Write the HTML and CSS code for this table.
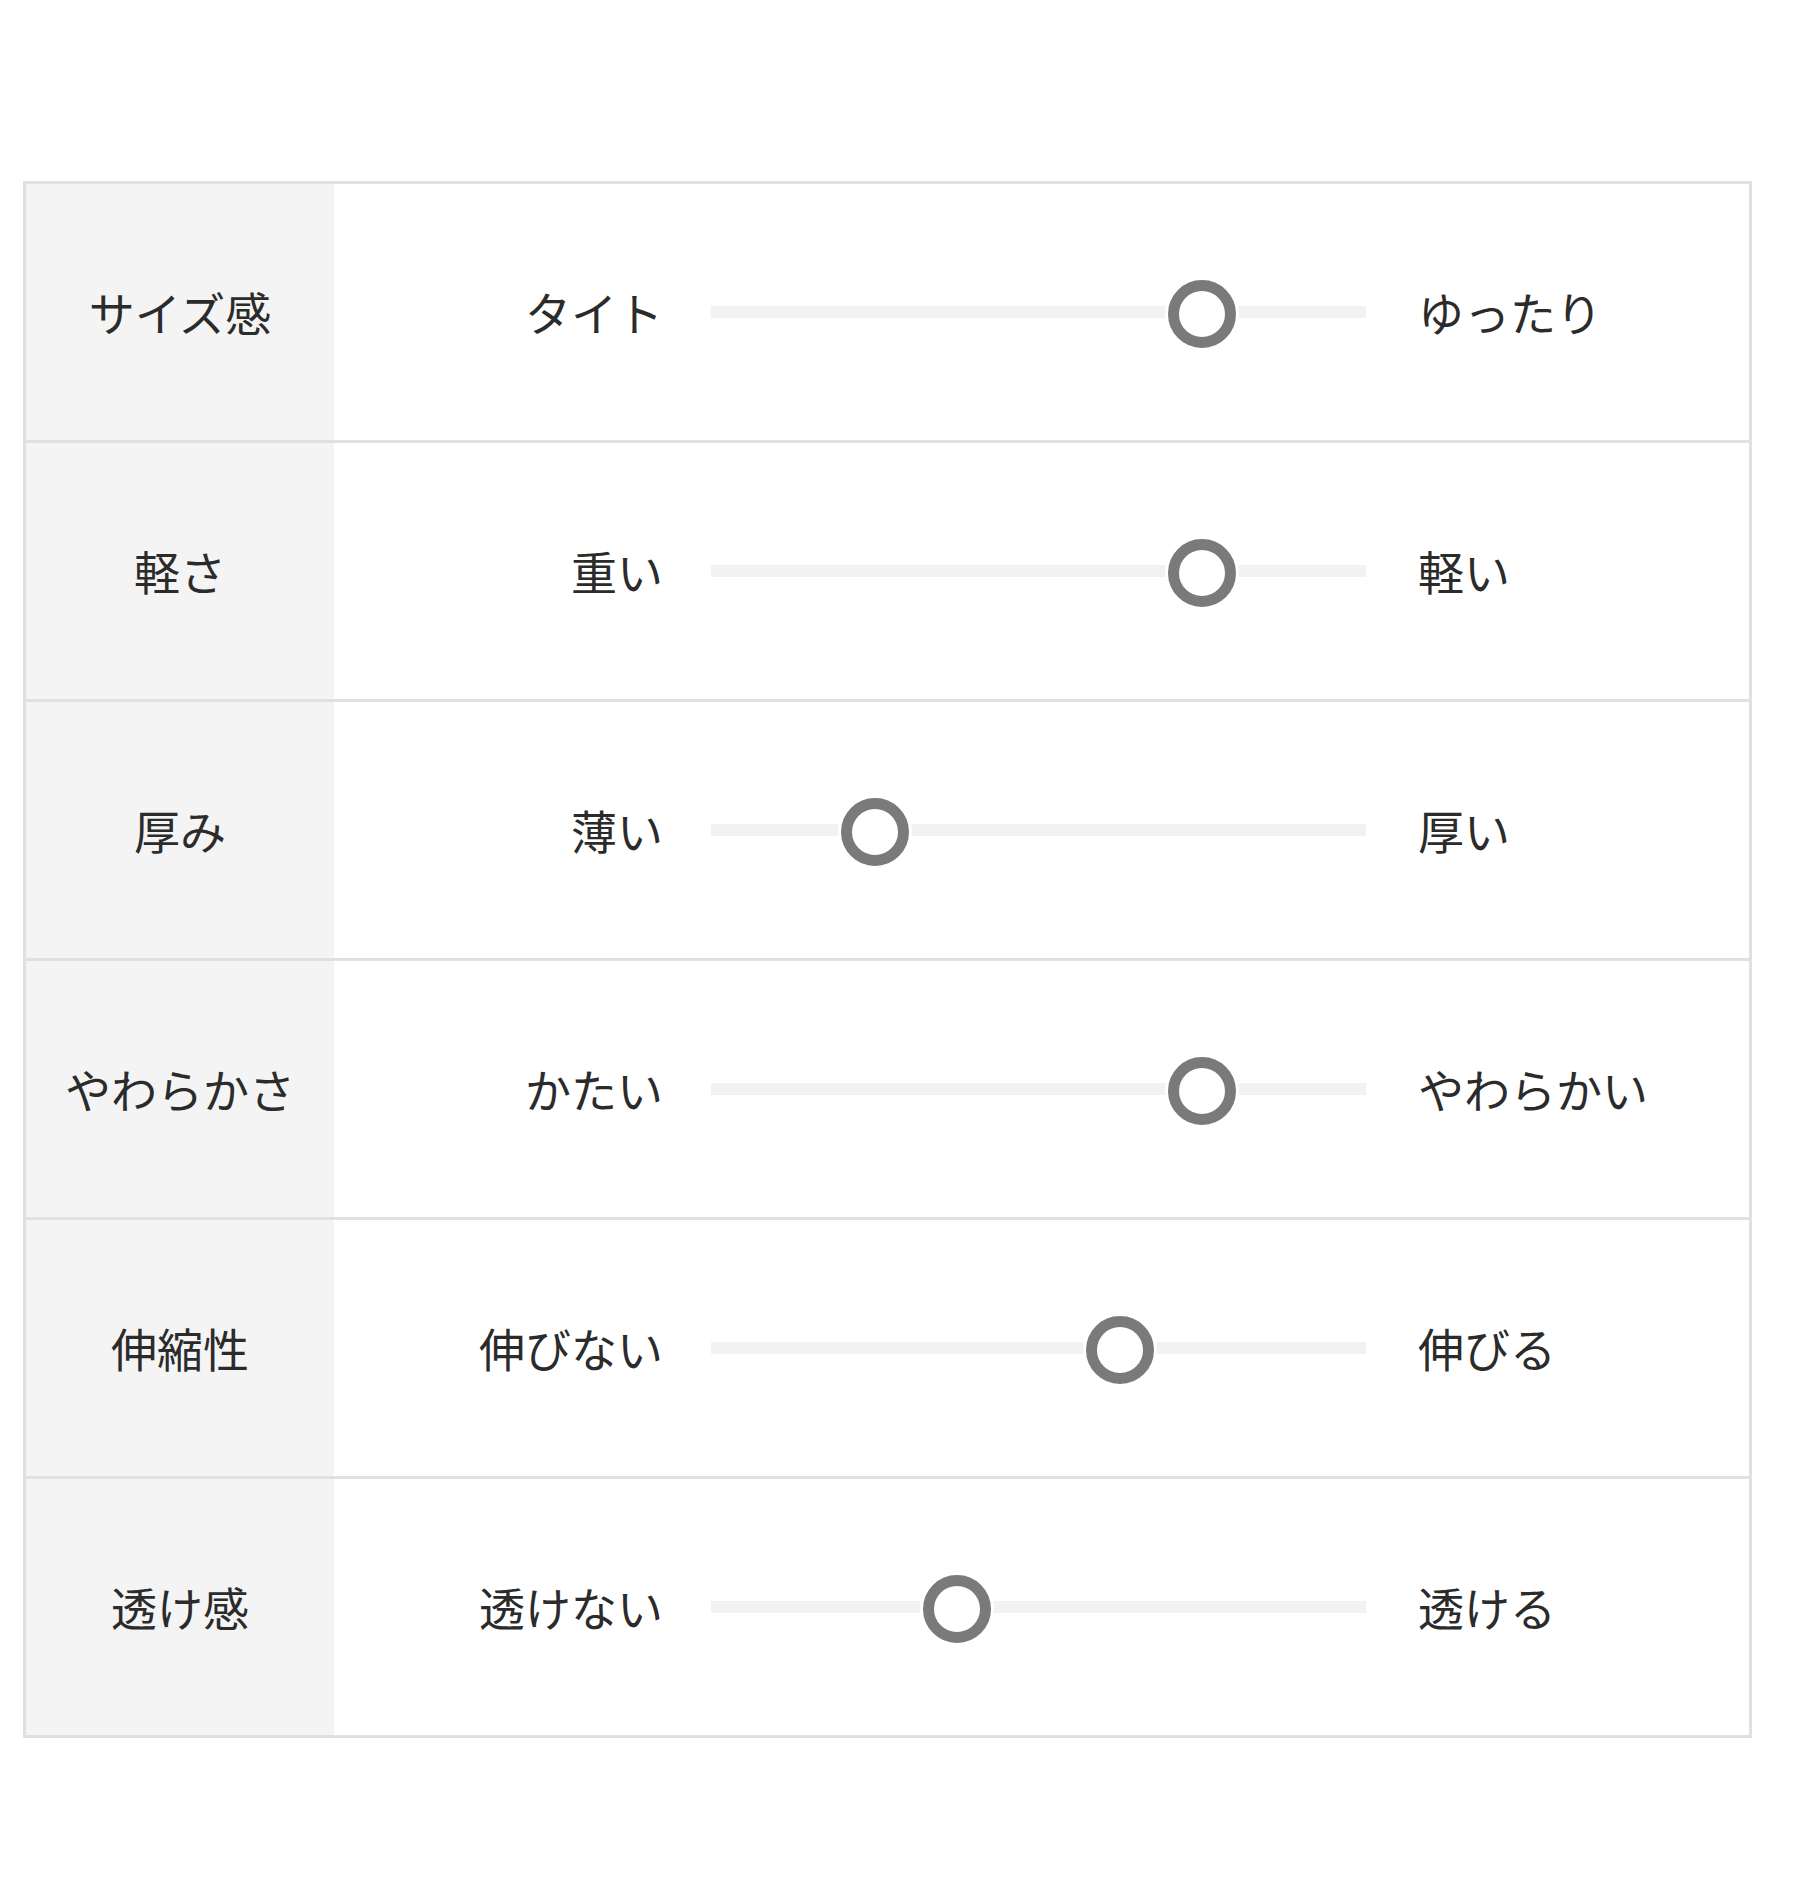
FILE: index.html
```html
<!DOCTYPE html>
<html lang="ja">
<head>
<meta charset="utf-8">
<title>サイズ・素材感</title>
<link rel="stylesheet" href="styles.css">
</head>
<body>
<div class="page">
  <div class="spec-table">
    <div class="spec-row">
      <div class="spec-head">サイズ感</div>
      <div class="spec-body">
        <span class="lbl lbl-left">タイト</span>
        <div class="track"><span class="knob" style="left:75%"></span></div>
        <span class="lbl lbl-right">ゆったり</span>
      </div>
    </div>
    <div class="spec-row">
      <div class="spec-head">軽さ</div>
      <div class="spec-body">
        <span class="lbl lbl-left">重い</span>
        <div class="track"><span class="knob" style="left:75%"></span></div>
        <span class="lbl lbl-right">軽い</span>
      </div>
    </div>
    <div class="spec-row">
      <div class="spec-head">厚み</div>
      <div class="spec-body">
        <span class="lbl lbl-left">薄い</span>
        <div class="track"><span class="knob" style="left:25%"></span></div>
        <span class="lbl lbl-right">厚い</span>
      </div>
    </div>
    <div class="spec-row">
      <div class="spec-head">やわらかさ</div>
      <div class="spec-body">
        <span class="lbl lbl-left">かたい</span>
        <div class="track"><span class="knob" style="left:75%"></span></div>
        <span class="lbl lbl-right">やわらかい</span>
      </div>
    </div>
    <div class="spec-row">
      <div class="spec-head">伸縮性</div>
      <div class="spec-body">
        <span class="lbl lbl-left">伸びない</span>
        <div class="track"><span class="knob" style="left:62.5%"></span></div>
        <span class="lbl lbl-right">伸びる</span>
      </div>
    </div>
    <div class="spec-row">
      <div class="spec-head">透け感</div>
      <div class="spec-body">
        <span class="lbl lbl-left">透けない</span>
        <div class="track"><span class="knob" style="left:37.5%"></span></div>
        <span class="lbl lbl-right">透ける</span>
      </div>
    </div>
  </div>
</div>
</body>
</html>
```

FILE: styles.css
```css
html, body {
  margin: 0;
  padding: 0;
  background: #ffffff;
}

body {
  font-family: "Noto Sans CJK JP", "Noto Sans", sans-serif;
  color: #2b2b2b;
}

.page {
  padding: 181px 0 0 23px;
}

.spec-table {
  width: 1729px;
  box-sizing: border-box;
  border: 3px solid #e0e0e0;
}

.spec-row {
  display: flex;
  height: 256px;
}

.spec-row + .spec-row {
  border-top: 3px solid #e0e0e0;
}

.spec-head {
  width: 308px;
  flex: none;
  background: #f4f4f4;
  display: flex;
  align-items: center;
  justify-content: center;
  font-size: 46px;
  line-height: 1;
  padding-bottom: 2px;
  box-sizing: border-box;
}

.spec-body {
  flex: 1;
  display: grid;
  grid-template-columns: 329px 655px 1fr;
  column-gap: 48px;
  align-items: center;
}

.lbl {
  font-size: 46px;
  line-height: 1;
  white-space: nowrap;
  padding-bottom: 2px;
}

.lbl-left {
  text-align: right;
}

.lbl-right {
  text-align: left;
  padding-left: 4px;
}

.track {
  position: relative;
  height: 12px;
  background: #f2f2f2;
}

.knob {
  position: absolute;
  top: 50%;
  width: 68px;
  height: 68px;
  box-sizing: border-box;
  border-radius: 50%;
  border: 11px solid #7a7a7a;
  background: #ffffff;
  box-shadow: 0 0 0 3px #ffffff;
  transform: translate(-50%, calc(-50% + 2px));
}
```
